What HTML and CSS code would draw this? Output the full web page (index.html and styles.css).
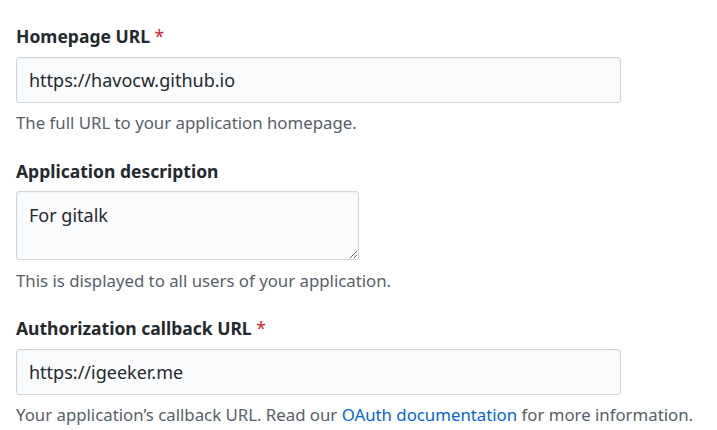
FILE: index.html
```html
<!DOCTYPE html>
<html>
<head>
<meta charset="utf-8">
<link rel="stylesheet" href="styles.css">
</head>
<body>
<form class="form">
  <div class="group">
    <label class="label">Homepage URL <span class="req">*</span></label>
    <input class="field wide" type="text" value="https://havocw.github.io">
    <p class="note">The full URL to your application homepage.</p>
  </div>
  <div class="group">
    <label class="label">Application description</label>
    <textarea class="field area">For gitalk</textarea>
    <p class="note">This is displayed to all users of your application.</p>
  </div>
  <div class="group">
    <label class="label">Authorization callback URL <span class="req">*</span></label>
    <input class="field wide" type="text" value="https://igeeker.me">
    <p class="note">Your application’s callback URL. Read our <a class="link" href="#">OAuth documentation</a> for more information.</p>
  </div>
</form>
</body>
</html>
```
FILE: styles.css
```css
html, body {
  margin: 0;
  padding: 0;
  background: #ffffff;
}
body {
  font-family: "Noto Sans", "Open Sans", sans-serif;
  color: #24292e;
}
.form {
  padding: 24px 16px 0 16px;
}
.group {
  display: flex;
  flex-direction: column;
  align-items: flex-start;
  margin-bottom: 24.5px;
}
.label {
  font-weight: 700;
  font-size: 17.5px;
  line-height: 24px;
  margin-bottom: 8.5px;
}
.req {
  color: #cb2431;
  font-weight: 400;
}
.field {
  box-sizing: border-box;
  font-family: inherit;
  font-size: 18px;
  color: #24292e;
  background: #fafbfc;
  border: 1px solid #d1d5da;
  border-radius: 3px;
  padding: 8px 12px;
  margin: 0;
  outline: none;
  box-shadow: inset 0 1px 2px rgba(27,31,35,0.05);
}
.wide {
  width: 605px;
  height: 46px;
}
.area {
  width: 343px;
  height: 69px;
  resize: vertical;
  line-height: 26px;
  padding: 10px 12px;
}
.note {
  margin: 9.5px 0 0 0;
  font-size: 16.8px;
  line-height: 22px;
  color: #586069;
}
.link {
  color: #0366d6;
  text-decoration: none;
}
```
